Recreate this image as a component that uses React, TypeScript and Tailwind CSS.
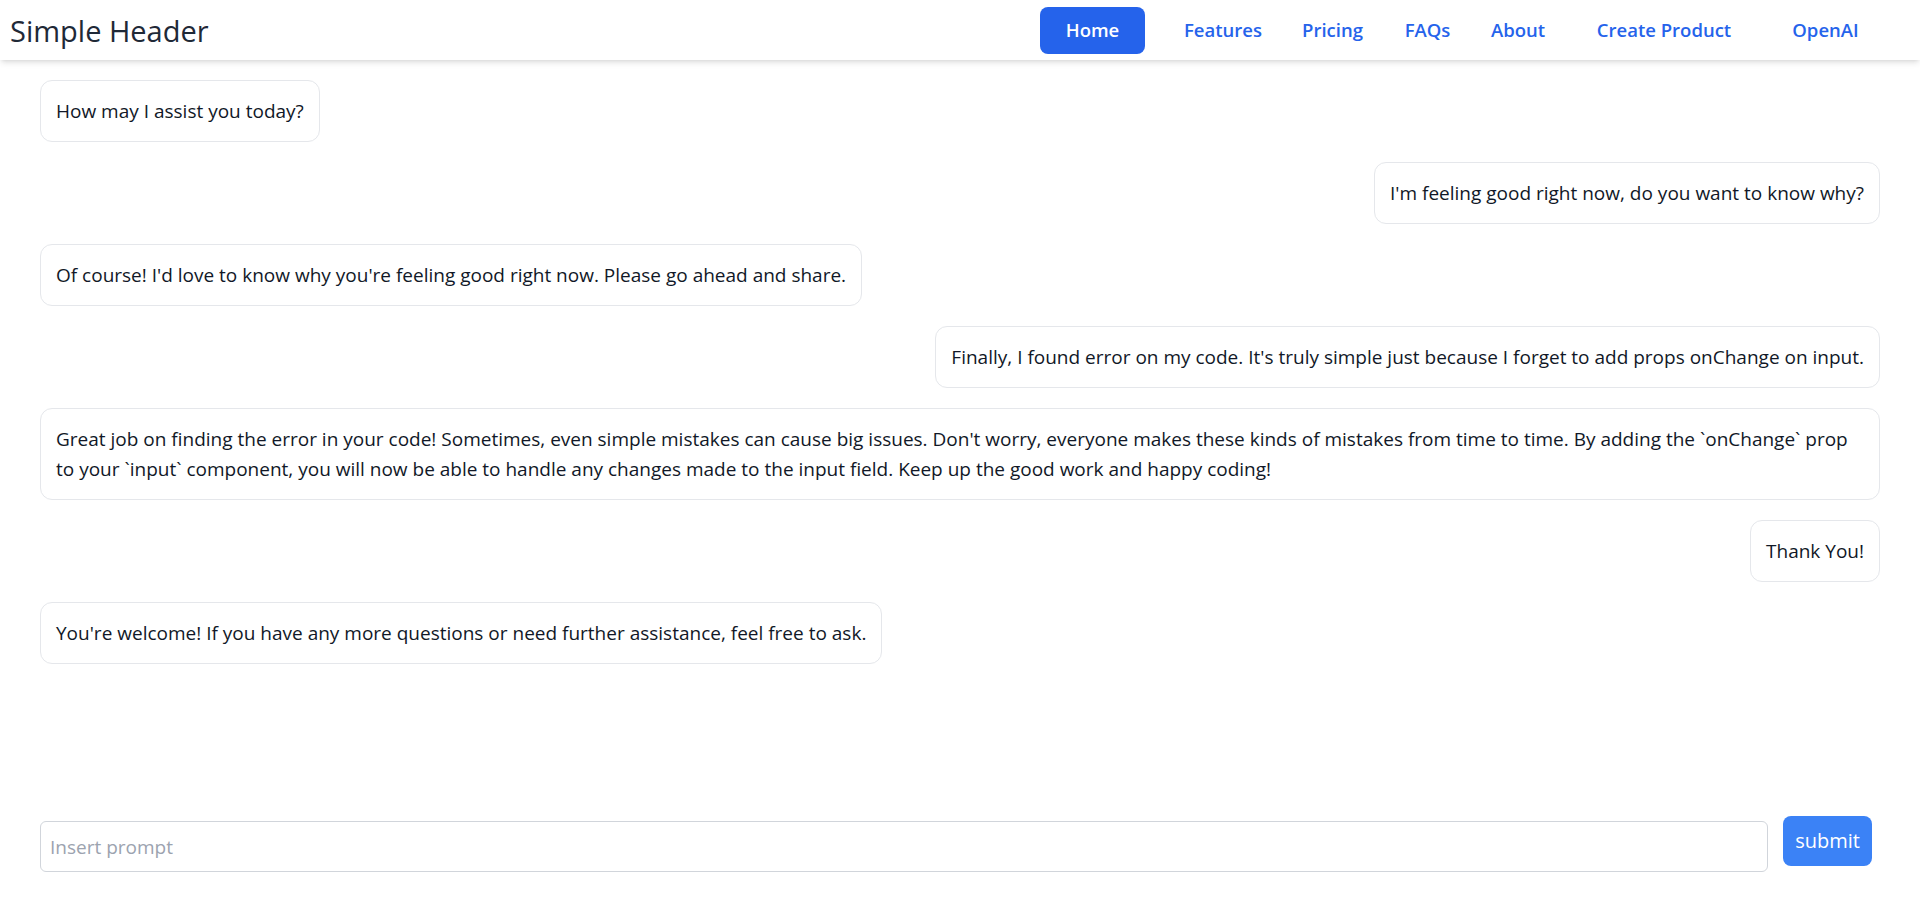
import React from "react";

type Msg = { side: "left" | "right"; text: React.ReactNode; full?: boolean };

const messages: Msg[] = [
  { side: "left", text: "How may I assist you today?" },
  { side: "right", text: "I'm feeling good right now, do you want to know why?" },
  {
    side: "left",
    text: "Of course! I'd love to know why you're feeling good right now. Please go ahead and share.",
  },
  {
    side: "right",
    text: "Finally, I found error on my code. It's truly simple just because I forget to add props onChange on input.",
  },
  {
    side: "left",
    full: true,
    text: (
      <>
        Great job on finding the error in your code! Sometimes, even simple mistakes can cause big issues. Don't
        worry, everyone makes these kinds of mistakes from time to time. By adding the `onChange` prop
        <br />
        to your `input` component, you will now be able to handle any changes made to the input field. Keep up the
        good work and happy coding!
      </>
    ),
  },
  { side: "right", text: "Thank You!" },
  {
    side: "left",
    text: "You're welcome! If you have any more questions or need further assistance, feel free to ask.",
  },
];

const navItems = [
  { label: "Features", w: "w-[116px]" },
  { label: "Pricing", w: "w-[103px]" },
  { label: "FAQs", w: "w-[87px]" },
  { label: "About", w: "w-[94px]" },
  { label: "Create Product", w: "w-[198px]" },
  { label: "OpenAI", w: "w-[125px]" },
];

export default function App() {
  return (
    <div className="flex min-h-screen flex-col bg-white font-['Open_Sans',sans-serif] text-[#111827]">
      <header className="flex h-[60px] items-center justify-between bg-white pl-2.5 pr-8 shadow-md">
        <h1 className="text-[29px] leading-none text-[#1f2937]">Simple Header</h1>
        <nav className="flex items-center">
          <a className="flex h-[47px] w-[105px] items-center justify-center rounded-lg bg-[#2563eb] text-[18.5px] font-semibold text-white">
            Home
          </a>
          <ul className="ml-5 flex items-center">
            {navItems.map((n) => (
              <li
                key={n.label}
                className={`${n.w} text-center text-[18.5px] font-semibold text-[#2563eb]`}
              >
                {n.label}
              </li>
            ))}
          </ul>
        </nav>
      </header>

      <main className="flex flex-1 flex-col gap-5 px-10 pt-5">
        {messages.map((m, i) => (
          <div
            key={i}
            className={`flex ${m.side === "right" ? "justify-end" : "justify-start"}`}
          >
            <div
              className={`${m.full ? "w-full" : ""} whitespace-nowrap rounded-xl border border-[#e5e7eb] bg-white px-[15px] py-[15px] text-[19px] leading-[30px] text-[#111827]`}
            >
              {m.text}
            </div>
          </div>
        ))}
      </main>

      <form className="flex items-start gap-[15px] pb-[51px] pl-10 pr-12">
        <input
          className="mt-[5px] h-[51px] flex-1 rounded-md border border-[#d1d5db] px-[9px] text-[19px] text-[#111827] placeholder:text-[#9ca3af] outline-none"
          placeholder="Insert prompt"
        />
        <button
          type="button"
          className="h-[50px] w-[89px] rounded-lg bg-[#3b82f6] text-[20px] text-white"
        >
          submit
        </button>
      </form>
    </div>
  );
}
